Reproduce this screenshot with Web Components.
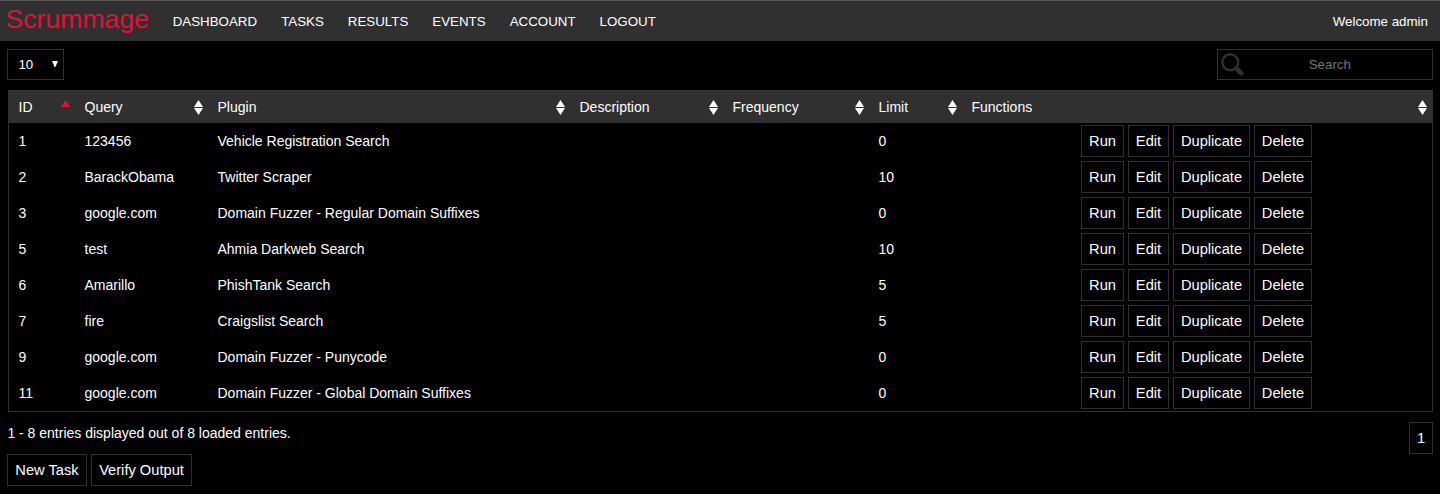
<!DOCTYPE html>
<html lang="en">
<head>
<meta charset="utf-8">
<title>Scrummage</title>
<style>
html,body{margin:0;background:#000;color:#fff;font-family:"Liberation Sans",Arial,sans-serif;font-size:14px}
body{height:494px;overflow:hidden}
</style>
</head>
<body>
<scrum-app></scrum-app>
<script>
const define = (name, html) => customElements.define(name, class extends HTMLElement {
  connectedCallback() {
    if (this.shadowRoot) return;
    const t = document.createElement('template');
    t.innerHTML = typeof html === 'function' ? html(this) : html;
    this.attachShadow({mode: 'open'}).append(t.content.cloneNode(true));
  }
});

define('scrum-button', `<style>
:host{display:inline-block}
button{display:block;box-sizing:border-box;width:100%;height:32px;margin:0;padding:0 6px;background:#000;border:1px solid #303030;border-radius:0;color:#fff;font:14.667px/30px "Liberation Sans",Arial,sans-serif;white-space:nowrap}
</style><button><slot></slot></button>`);

define('scrum-nav', `<style>
:host{display:flex;box-sizing:border-box;height:41px;background:#303030;border-top:1px solid #555;align-items:center;font-size:13.333px;padding:0 12px 0 5.4px}
.brand{color:#dc143c;font-size:26.667px;line-height:30px;margin:-4px 11.6px 0 0}
nav{display:flex}
::slotted(a){padding:0 12px;color:#fff}
.user{margin-left:auto}
</style><span class="brand">Scrummage</span><nav><slot></slot></nav><span class="user">Welcome admin</span>`);

define('scrum-length', `<style>
:host{display:flex;box-sizing:border-box;width:57px;height:31px;border:1px solid #303030;padding:0 5px 0 10.4px;align-items:center;justify-content:space-between;font-size:13.333px}
svg{margin-top:-2px}
</style><slot></slot><svg width="6" height="6"><path d="M0 0h6L3.4 6h-.8z" fill="#fff"/></svg>`);

define('scrum-search', `<style>
:host{display:grid;box-sizing:border-box;width:216px;height:31px;border:1px solid #303030;grid-template-columns:26px 1fr;align-items:center}
svg{display:block;margin-left:3px}
input{min-width:0;width:100%;box-sizing:border-box;padding:0 16.4px 0 0;margin:0;border:0;outline:0;background:transparent;color:#fff;text-align:center;font:13.333px "Liberation Sans",Arial,sans-serif}
input::placeholder{color:#757575;opacity:1}
</style><svg width="23" height="23" viewBox="0 0 23 23" fill="none" stroke="#303030"><circle cx="9.3" cy="9.3" r="8" stroke-width="2.4"/><path d="M14.8 14.8l2 2" stroke-width="3"/><path d="M16.6 16.6l3.7 3.7" stroke-width="4.6" stroke-linecap="round"/></svg><input placeholder="Search">`);

define('sort-icon', el => `<style>:host{display:block;height:15px}svg{display:block}</style><svg width="9" height="15">${
  el.hasAttribute('asc') ? '<path d="M4.5 0L9 7H0z" fill="#dc143c"/>'
  : '<path d="M4.5 0L9 7H0zM0 8h9L4.5 15z" fill="#fff"/>'}</svg>`);

const rows = [
  [1, '123456', 'Vehicle Registration Search', 0],
  [2, 'BarackObama', 'Twitter Scraper', 10],
  [3, 'google.com', 'Domain Fuzzer - Regular Domain Suffixes', 0],
  [5, 'test', 'Ahmia Darkweb Search', 10],
  [6, 'Amarillo', 'PhishTank Search', 5],
  [7, 'fire', 'Craigslist Search', 5],
  [9, 'google.com', 'Domain Fuzzer - Punycode', 0],
  [11, 'google.com', 'Domain Fuzzer - Global Domain Suffixes', 0]
];
const heads = ['ID', 'Query', 'Plugin', 'Description', 'Frequency', 'Limit', 'Functions'];

define('scrum-table', `<style>
:host{display:block;box-sizing:border-box;border:1px solid #303030;border-top:0}
.row{display:grid;grid-template-columns:66px 133px 362px 153px 146px 93px 1fr;height:36px;align-items:center}
.row>*{padding-left:9.5px;white-space:nowrap}
.head{height:33px;background:#303030}
.head>div{display:flex;justify-content:space-between;align-items:center;padding-right:5px}
.head sort-icon{margin-top:2px}
.row>.fn{display:grid;grid-template-columns:43px 41px 77px 58px;justify-content:center;gap:4px;padding:0 1px 0 0}
</style><div class="row head">${heads.map((h, i) => `<div>${h}<sort-icon ${i ? '' : 'asc'}></sort-icon></div>`).join('')}</div>${
rows.map(r => `<div class="row"><span>${r[0]}</span><span>${r[1]}</span><span>${r[2]}</span><span></span><span></span><span>${r[3]}</span><div class="fn"><scrum-button>Run</scrum-button><scrum-button>Edit</scrum-button><scrum-button>Duplicate</scrum-button><scrum-button>Delete</scrum-button></div></div>`).join('')}`);

define('scrum-app', `<style>
:host{display:block}
.tools{display:flex;justify-content:space-between;padding:8px 7px 10px}
scrum-table{margin:0 7px 0 8px}
.info{display:flex;justify-content:space-between;align-items:flex-start;padding:10px 7px 0 7.4px;height:32px;line-height:22px}
.info scrum-button{width:24px}
.actions{display:grid;grid-template-columns:80px 101px;gap:4px;padding-left:7px}
</style>
<scrum-nav><a>DASHBOARD</a><a>TASKS</a><a>RESULTS</a><a>EVENTS</a><a>ACCOUNT</a><a>LOGOUT</a></scrum-nav>
<div class="tools"><scrum-length>10</scrum-length><scrum-search></scrum-search></div>
<scrum-table></scrum-table>
<div class="info"><span>1 - 8 entries displayed out of 8 loaded entries.</span><scrum-button>1</scrum-button></div>
<div class="actions"><scrum-button>New Task</scrum-button><scrum-button>Verify Output</scrum-button></div>`);
</script>
</body>
</html>
